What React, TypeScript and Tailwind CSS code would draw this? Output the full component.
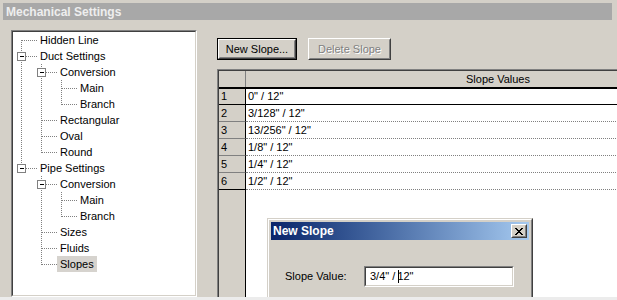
const FONT = { fontFamily: '"Liberation Sans", Arial, sans-serif' }

type Node = { label: string; level: number; selected?: boolean }

const TREE: Node[] = [
  { label: 'Hidden Line', level: 0 },
  { label: 'Duct Settings', level: 0 },
  { label: 'Conversion', level: 1 },
  { label: 'Main', level: 2 },
  { label: 'Branch', level: 2 },
  { label: 'Rectangular', level: 1 },
  { label: 'Oval', level: 1 },
  { label: 'Round', level: 1 },
  { label: 'Pipe Settings', level: 0 },
  { label: 'Conversion', level: 1 },
  { label: 'Main', level: 2 },
  { label: 'Branch', level: 2 },
  { label: 'Sizes', level: 1 },
  { label: 'Fluids', level: 1 },
  { label: 'Slopes', level: 1, selected: true },
]

const SLOPES = ['0" / 12"', '3/128" / 12"', '13/256" / 12"', '1/8" / 12"', '1/4" / 12"', '1/2" / 12"']

// row centre inside the tree (16px rows)
const cy = (i: number) => 8 + 16 * i + 0.5

function TreeLines() {
  const dot = { stroke: '#808080', strokeWidth: 1, strokeDasharray: '1 1', shapeRendering: 'crispEdges' as const }
  const vert = (x: number, y1: number, y2: number) => <line x1={x} y1={y1} x2={x} y2={y2} {...dot} />
  const horiz = (x1: number, x2: number, i: number) => <line x1={x1} y1={cy(i)} x2={x2} y2={cy(i)} {...dot} />
  const box = (x: number, i: number) => (
    <g>
      <rect x={x + 0.5} y={cy(i) - 4} width={8} height={8} fill="white" stroke="#808080" shapeRendering="crispEdges" />
      <line x1={x + 2.5} y1={cy(i)} x2={x + 7} y2={cy(i)} stroke="black" shapeRendering="crispEdges" />
    </g>
  )
  return (
    <svg className="absolute left-0 top-0" width="180" height="270">
      {/* roots */}
      {vert(8.5, 8, 136.5)}
      {[0, 1, 8].map((i) => <g key={i}>{horiz(8.5, 24, i)}</g>)}
      {/* duct children */}
      {vert(28.5, 32, 120.5)}
      {[2, 5, 6, 7].map((i) => <g key={i}>{horiz(28.5, 44, i)}</g>)}
      {vert(48.5, 48, 72.5)}
      {[3, 4].map((i) => <g key={i}>{horiz(48.5, 64, i)}</g>)}
      {/* pipe children */}
      {vert(28.5, 144, 232.5)}
      {[9, 12, 13, 14].map((i) => <g key={i}>{horiz(28.5, 44, i)}</g>)}
      {vert(48.5, 160, 184.5)}
      {[10, 11].map((i) => <g key={i}>{horiz(48.5, 64, i)}</g>)}
      {box(4, 1)}
      {box(4, 8)}
      {box(24, 2)}
      {box(24, 9)}
    </svg>
  )
}

function Button({ label, disabled, isDefault, width }: { label: string; disabled?: boolean; isDefault?: boolean; width: string }) {
  return (
    <div className={`${width} h-[22px] ${isDefault ? 'border border-black' : ''}`}>
      <div className="h-full border border-t-white border-l-white border-r-[#404040] border-b-[#404040] bg-[#d4d0c8]">
        <div className="flex h-full items-center justify-center border border-t-[#d4d0c8] border-l-[#d4d0c8] border-r-[#808080] border-b-[#808080] text-[11px]">
          {disabled ? (
            <span className="text-[#808080] [text-shadow:1px_1px_0_#ffffff]">{label}</span>
          ) : (
            <span className="text-black">{label}</span>
          )}
        </div>
      </div>
    </div>
  )
}

function SlopeGrid() {
  return (
    <div className="flex flex-1 flex-col overflow-hidden border-l border-t border-l-[#808080] border-t-[#808080]">
      <div className="flex flex-1 flex-col border-l border-t border-l-[#404040] border-t-[#404040]">
        {/* header */}
        <div className="flex h-[16px] shrink-0">
          <div className="w-[27px] shrink-0 border-r border-r-[#808080] bg-[#d4d0c8]" />
          <div className="flex w-[504px] shrink-0 items-center justify-center bg-[#d4d0c8] text-[11px] text-black">
            Slope Values
          </div>
        </div>
        {SLOPES.map((s, i) => (
          <div key={i} className={`flex shrink-0 ${i === 0 ? 'h-[18px] border-t-2 border-t-black' : 'h-[17px]'}`}>
            <div
              className={`flex w-[27px] shrink-0 items-center border-b border-r border-r-black bg-[#d4d0c8] pl-[2px] text-[11px] text-black ${
                i === 0 || i === 5 ? 'border-b-black' : 'border-b-[#808080]'
              }`}
            >
              {i + 1}
            </div>
            <div
              className={`flex w-[504px] shrink-0 items-center bg-white pl-[2px] text-[11px] text-black ${
                i === 0 ? 'border-b border-b-black' : 'border-b border-dotted border-b-[#808080]'
              }`}
            >
              {s}
            </div>
          </div>
        ))}
        <div className="flex flex-1">
          <div className="w-[27px] shrink-0 border-r border-r-black bg-[#d4d0c8]" />
          <div className="w-[504px] shrink-0 bg-white" />
        </div>
      </div>
    </div>
  )
}

function NewSlopeDialog() {
  return (
    <div className="absolute left-[267px] top-[218px] h-[100px] w-[266px] border border-t-[#d4d0c8] border-l-[#d4d0c8] border-r-[#404040] border-b-[#404040] bg-[#d4d0c8]">
      <div className="h-full border border-t-white border-l-white border-r-[#808080] border-b-[#808080] p-[2px]">
        <div className="flex h-[18px] items-center justify-between bg-gradient-to-r from-[#0a246a] to-[#a6caf0] pl-[2px] pr-[2px]">
          <span className="text-[12px] font-bold text-white">New Slope</span>
          <div className="h-[14px] w-[16px] border border-t-white border-l-white border-r-[#404040] border-b-[#404040] bg-[#d4d0c8]">
            <div className="flex h-full items-center justify-center border border-t-[#d4d0c8] border-l-[#d4d0c8] border-r-[#808080] border-b-[#808080]">
              <svg width="8" height="7" viewBox="0 0 8 7" shapeRendering="crispEdges">
                <path d="M0 0h2v1h1v1h2V1h1V0h2v1H7v1H6v1H5v1h1v1h1v1h1v1H6V6H5V5H3v1H2v1H0V6h1V5h1V4h1V3H2V2H1V1H0z" fill="black" />
              </svg>
            </div>
          </div>
        </div>
        <div className="flex items-center pl-[14px] pt-[26px]">
          <span className="w-[79px] text-[11px] text-black">Slope Value:</span>
          <div className="h-[21px] w-[150px] border border-t-[#808080] border-l-[#808080] border-r-white border-b-white">
            <div className="flex h-full items-center border border-t-[#404040] border-l-[#404040] border-r-[#d4d0c8] border-b-[#d4d0c8] bg-white pl-[4px] text-[11px] text-black">
              <span>3/4" /&nbsp;</span>
              <span className="-mr-[2px] inline-block h-[13px] w-px bg-black" />
              <span>12"</span>
            </div>
          </div>
        </div>
      </div>
    </div>
  )
}

export default function App() {
  return (
    <div
      style={FONT}
      className="relative flex h-[300px] w-[617px] flex-col overflow-hidden border-b-[3px] border-b-[#ececec] bg-[#d4d0c8]"
    >
      {/* window title */}
      <div className="mx-[3px] mr-[5px] mt-[3px] flex h-[17px] shrink-0 items-center bg-[#a8a8a8] pl-[3px] text-[12px] font-bold text-[#eeeeee]">
        Mechanical Settings
      </div>

      <div className="flex flex-1 pt-[10px]">
        {/* tree */}
        <div className="ml-[11px] w-[186px] shrink-0 border border-t-[#808080] border-l-[#808080] border-r-white border-b-white">
          <div className="h-full border border-t-[#404040] border-l-[#404040] border-r-[#d4d0c8] border-b-[#d4d0c8] bg-white">
            <div className="relative h-full">
              <TreeLines />
              <div className="relative">
                {TREE.map((n, i) => (
                  <div
                    key={i}
                    className={`flex h-[16px] items-center text-[11px] text-black ${
                      n.level === 0 ? 'pl-[27px]' : n.level === 1 ? 'pl-[47px]' : 'pl-[67px]'
                    }`}
                  >
                    {n.selected ? (
                      <span className="-ml-[3px] flex h-[16px] items-center bg-[#d6d3ce] px-[3px]">{n.label}</span>
                    ) : (
                      n.label
                    )}
                  </div>
                ))}
              </div>
            </div>
          </div>
        </div>

        {/* slopes page */}
        <div className="ml-[20px] flex flex-1 flex-col">
          <div className="mt-[8px] flex gap-[11px]">
            <Button label="New Slope..." isDefault width="w-[80px]" />
            <Button label="Delete Slope" disabled width="w-[83px]" />
          </div>
          <div className="mt-[9px] flex flex-1">
            <SlopeGrid />
          </div>
        </div>
      </div>

      <NewSlopeDialog />
    </div>
  )
}
